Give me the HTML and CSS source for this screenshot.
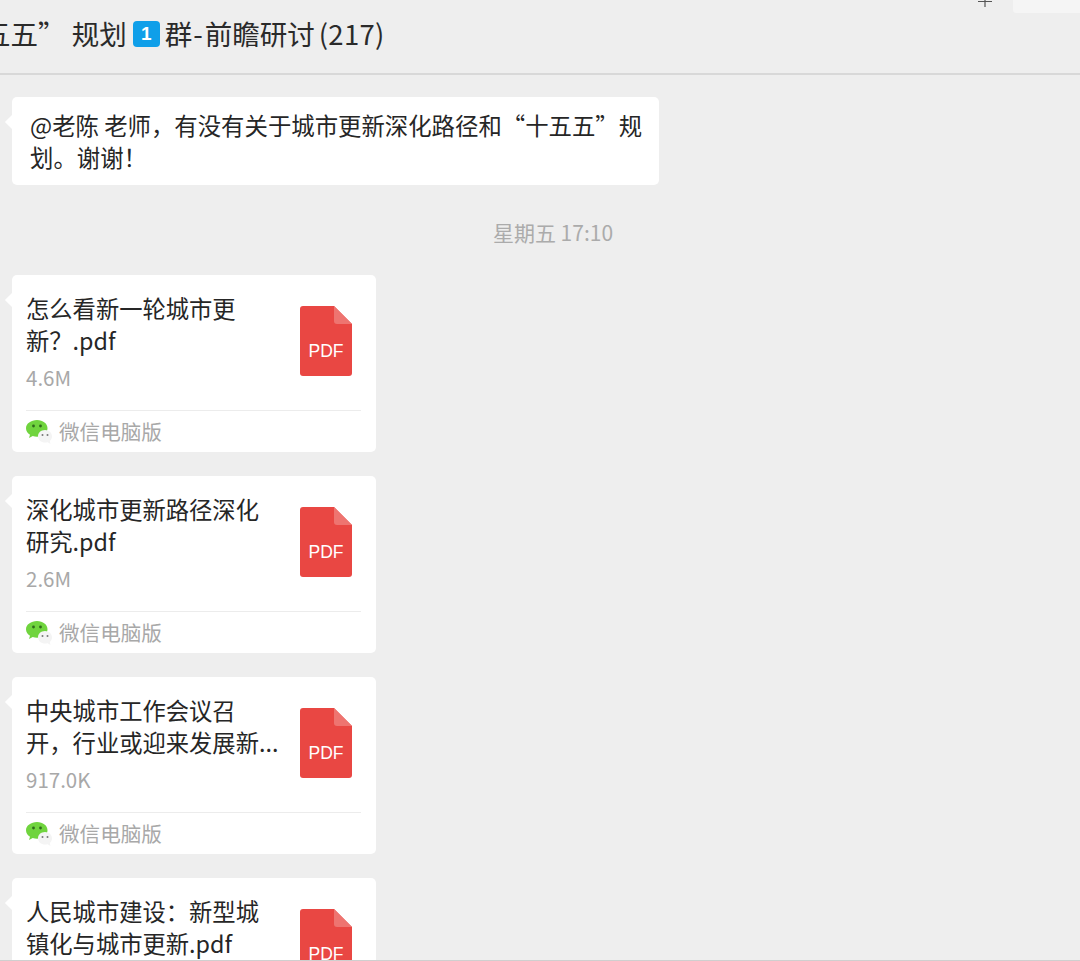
FILE: index.html
```html
<!DOCTYPE html>
<html lang="zh-CN">
<head>
<meta charset="utf-8">
<title>群聊</title>
<link rel="stylesheet" href="styles.css">
</head>
<body>
<svg class="defs" width="0" height="0" aria-hidden="true">
  <defs>
    <symbol id="pdf" viewBox="0 0 52 70">
      <path d="M3 0H34L52 18V67a3 3 0 0 1-3 3H3a3 3 0 0 1-3-3V3a3 3 0 0 1 3-3Z" fill="#e94743"/>
      <path d="M34 0L52 18H37a3 3 0 0 1-3-3Z" fill="#ee7470"/>
      <text x="26" y="51" text-anchor="middle" class="pdf-label">PDF</text>
    </symbol>
    <symbol id="wx" viewBox="0 0 26 24">
      <path d="M11 0C5 0 0 3.600 0 8.300c0 2.700 1.600 5 4 6.500L3 18l3.700-1.900c1.400.4 2.800.6 4.300.6 6 0 10.500-3.700 10.500-8.400S17 0 11 0Z" fill="#70d43e"/>
      <circle cx="7.500" cy="6" r="1.400" fill="#2f6b1c"/>
      <circle cx="14.500" cy="6" r="1.400" fill="#2f6b1c"/>
      <path d="M19 10c-4 0-7 2.800-7 6.300s3 6.300 7 6.300c.9 0 1.800-.1 2.600-.4L24.500 24l-.7-2.900c1.400-1.100 2.200-2.800 2.200-4.800 0-3.500-3-6.300-7-6.300Z" fill="#f4f4f4"/>
      <circle cx="16.500" cy="15" r="1" fill="#777"/>
      <circle cx="21.500" cy="15" r="1" fill="#777"/>
    </symbol>
  </defs>
</svg>
<div class="app">
  <header class="topbar">
    <h1 class="title">“十五五” 规划<span class="badge">1</span>群<span class="title-dash">-</span>前瞻研讨<span class="title-count">(217)</span></h1>
    <div class="tools">
      <svg class="plus" width="14" height="8" viewBox="0 0 14 8"><path d="M0 1.500H14M7 0V7" stroke="#555" stroke-width="1.200" fill="none"/></svg>
      <div class="panel"></div>
    </div>
  </header>
  <main class="chat">
    <div class="bubble message">@老陈 老师，有没有关于城市更新深化路径和“十五五”规<br>划。谢谢！</div>
    <div class="time">星期五 17:10</div>

    <article class="bubble card">
      <div class="card-body">
        <div class="card-text">
          <div class="name">怎么看新一轮城市更<br>新？.pdf</div>
          <div class="size">4.6M</div>
        </div>
        <svg class="file-icon"><use href="#pdf"/></svg>
      </div>
      <footer class="source"><svg class="wx-icon"><use href="#wx"/></svg>微信电脑版</footer>
    </article>

    <article class="bubble card">
      <div class="card-body">
        <div class="card-text">
          <div class="name">深化城市更新路径深化<br>研究.pdf</div>
          <div class="size">2.6M</div>
        </div>
        <svg class="file-icon"><use href="#pdf"/></svg>
      </div>
      <footer class="source"><svg class="wx-icon"><use href="#wx"/></svg>微信电脑版</footer>
    </article>

    <article class="bubble card">
      <div class="card-body">
        <div class="card-text">
          <div class="name">中央城市工作会议召<br>开，行业或迎来发展新...</div>
          <div class="size">917.0K</div>
        </div>
        <svg class="file-icon"><use href="#pdf"/></svg>
      </div>
      <footer class="source"><svg class="wx-icon"><use href="#wx"/></svg>微信电脑版</footer>
    </article>

    <article class="bubble card">
      <div class="card-body">
        <div class="card-text">
          <div class="name">人民城市建设：新型城<br>镇化与城市更新.pdf</div>
          <div class="size">1.2M</div>
        </div>
        <svg class="file-icon"><use href="#pdf"/></svg>
      </div>
      <footer class="source"><svg class="wx-icon"><use href="#wx"/></svg>微信电脑版</footer>
    </article>
  </main>
</div>
</body>
</html>
```

FILE: styles.css
```css
* { box-sizing: border-box; }
html, body { margin: 0; padding: 0; height: 100%; overflow: hidden; }
body {
  background: #eeeeee;
  color: #222;
  font-family: "Noto Sans CJK SC", "Liberation Sans", sans-serif;
}
.defs { display: block; height: 0; }
.app {
  height: 961px;
  overflow: hidden;
  border-bottom: 1px solid #cfcfcf;
}
.topbar {
  height: 75px;
  border-bottom: 2px solid #d8d8d8;
  display: flex;
  justify-content: space-between;
  align-items: flex-start;
  overflow: hidden;
}
.title {
  margin: 15px 0 0 -72px;
  font-size: 27.500px;
  line-height: 36px;
  font-weight: 400;
  color: #2a2a2a;
  white-space: pre;
  display: flex;
  align-items: center;
}
.title-dash { margin: 0 2px 0 1px; }
.title-count { margin-left: 4px; letter-spacing: 0.300px; }
.badge {
  width: 27px;
  height: 26px;
  margin: 2px 5px 0 6px;
  border-radius: 4px;
  background: #0f9fe9;
  color: #fff;
  font-family: "Liberation Sans", sans-serif;
  font-size: 19px;
  font-weight: 700;
  line-height: 26px;
  text-align: center;
}
.tools { display: flex; align-items: flex-start; gap: 21px; }
.plus { display: block; }
.panel {
  width: 67px;
  height: 13px;
  background: #f5f5f5;
  border-bottom-left-radius: 3px;
}
.chat {
  padding: 22px 0 0 12px;
  display: flex;
  flex-direction: column;
  align-items: flex-start;
}
.bubble {
  position: relative;
  background: #fff;
  border-radius: 5px;
}
.bubble::before {
  content: "";
  position: absolute;
  left: -5px;
  top: 20px;
  width: 10px;
  height: 10px;
  background: #fff;
  transform: rotate(45deg);
}
.message {
  width: 647px;
  height: 88px;
  padding: 12px 0 0 18px;
  font-size: 23.400px;
  line-height: 32px;
  color: #262626;
  white-space: nowrap;
}
.time {
  width: 1082px;
  margin: 32px 0 28px;
  text-align: center;
  font-size: 21px;
  line-height: 30px;
  color: #ababab;
}
.card {
  width: 364px;
  height: 177px;
  margin-bottom: 24px;
  flex: none;
  padding: 0 15px 0 14px;
}
.card-body {
  height: 136px;
  display: flex;
  justify-content: space-between;
  border-bottom: 1px solid #ececec;
}
.card-text { padding-top: 17px; }
.name {
  font-size: 23.300px;
  line-height: 32px;
  color: #262626;
  white-space: nowrap;
}
.size {
  margin-top: 6px;
  font-size: 20.500px;
  line-height: 30px;
  color: #a8a8a8;
}
.file-icon {
  width: 52px;
  height: 70px;
  margin: 31px 9px 0 0;
  flex: none;
}
.pdf-label {
  font-family: "Liberation Sans", sans-serif;
  font-size: 17.500px;
  fill: #fff;
}
.source {
  height: 41px;
  padding-bottom: 2px;
  display: flex;
  align-items: center;
  gap: 7px;
  font-size: 20.600px;
  color: #a8a8a8;
}
.wx-icon { width: 26px; height: 24px; flex: none; margin-top: 2px; }
```
